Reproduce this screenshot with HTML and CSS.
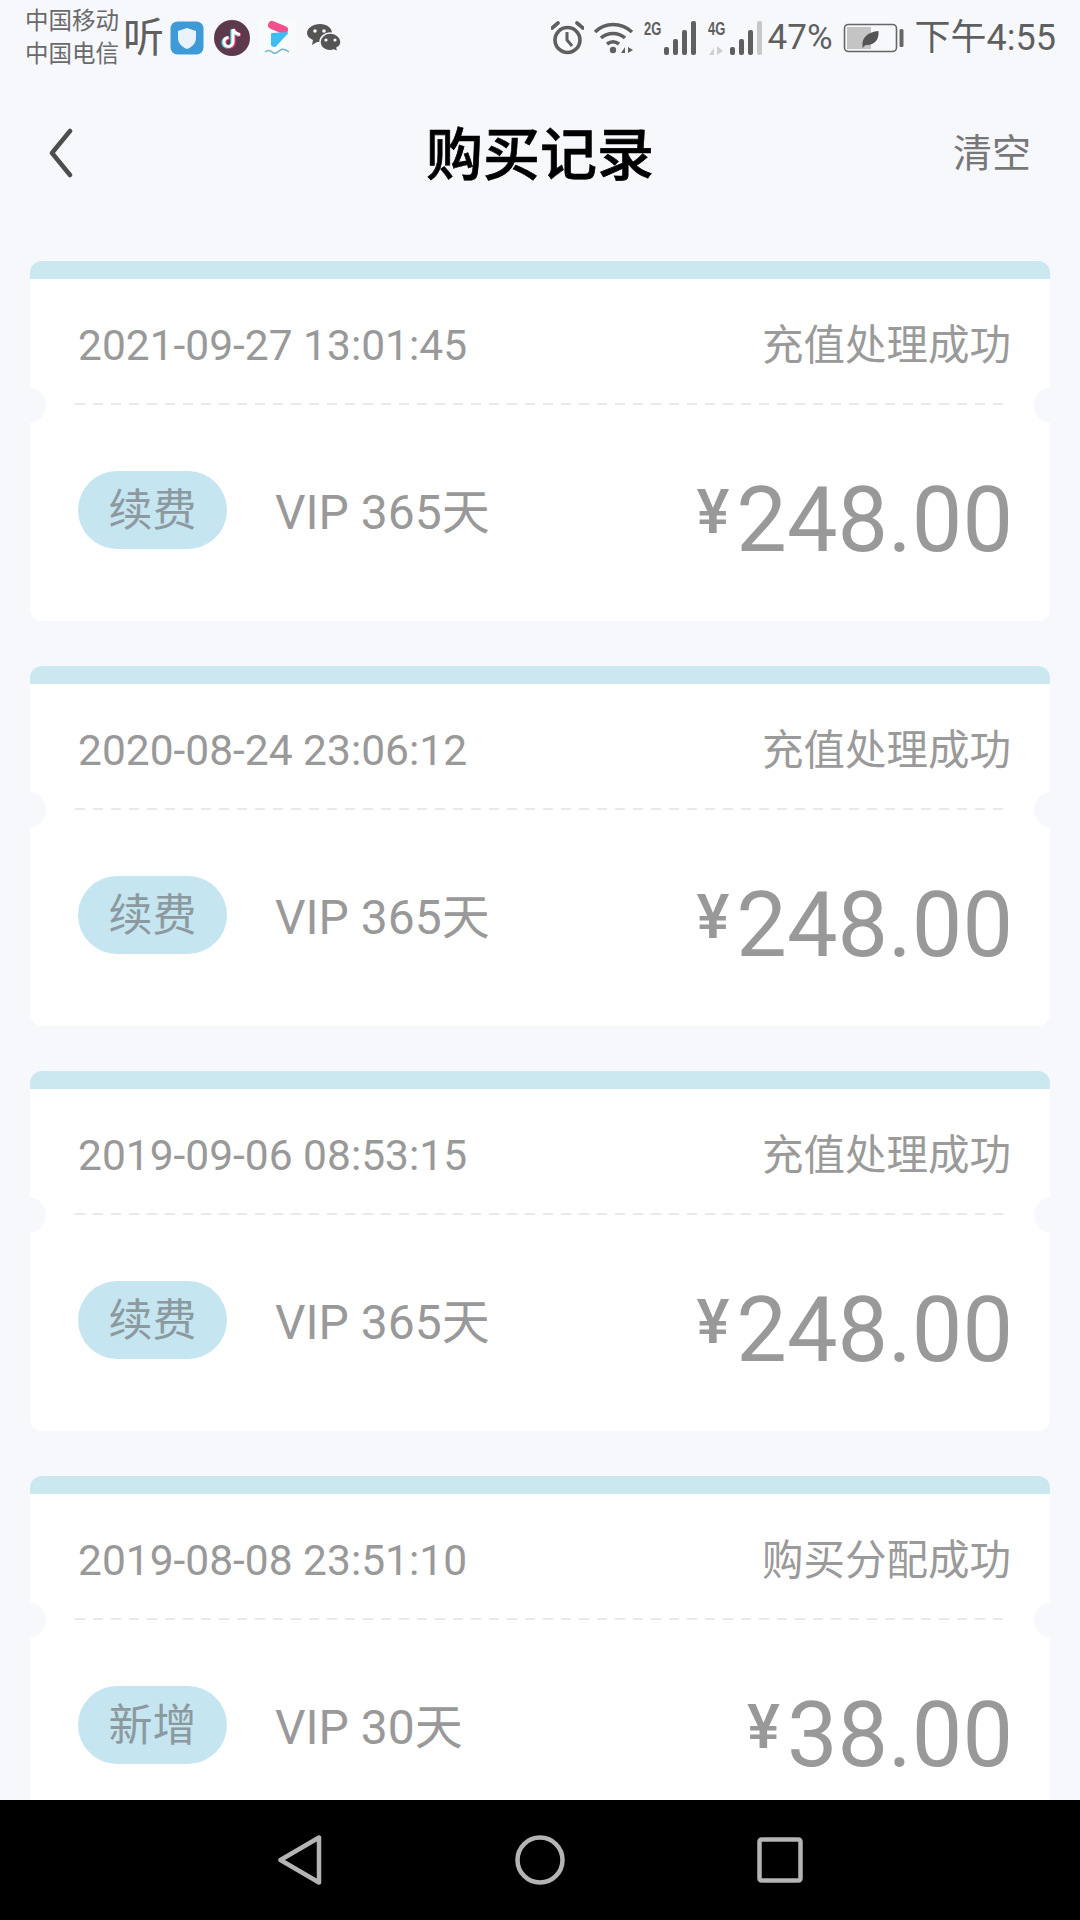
FILE: index.html
```html
<!doctype html>
<html lang="zh-CN">
<head>
    <meta charset="UTF-8">
    <title>购买记录</title>
    <link rel="stylesheet" href="styles.css">
</head>
<body>
<div class="screen">
    <div class="status">
        <div class="carrier"><span>中国移动</span><span>中国电信</span></div>
        <span class="ting">听</span>
        <svg class="ico-shield" width="34" height="34" viewBox="0 0 34 34">
            <rect x="0.5" y="0.5" width="33" height="33" rx="7" fill="#3f9bd8"/>
            <path d="M17 7 L26 10 V17 C26 22 22 26 17 28 C12 26 8 22 8 17 V10 Z" fill="#e9f3f9"/>
        </svg>
        <svg class="ico-tiktok" width="36" height="36" viewBox="0 0 36 36">
            <circle cx="18" cy="18" r="18" fill="#5c3a4b"/>
            <path d="M19 9 V22 A4.5 4.5 0 1 1 14.500 17.500 M19 9 C20 12.500 22 14 26 14.500" fill="none" stroke="#35d3de" stroke-width="3.400" transform="translate(-1 0.500)"/>
            <path d="M19 9 V22 A4.5 4.5 0 1 1 14.500 17.500 M19 9 C20 12.500 22 14 26 14.500" fill="none" stroke="#f0386b" stroke-width="3.400" transform="translate(1 0.500)"/>
            <path d="M19 9 V22 A4.5 4.5 0 1 1 14.500 17.500 M19 9 C20 12.500 22 14 26 14.500" fill="none" stroke="#fff" stroke-width="3"/>
        </svg>
        <svg class="ico-app" width="38" height="38" viewBox="0 0 38 38">
            <rect width="38" height="38" fill="#f8fbfc"/>
            <path d="M14 6 L26 11" fill="none" stroke="#f0508f" stroke-width="8" stroke-linecap="round"/>
            <path d="M14 15 L29 14 L17 27 Q13 27 14 24 Z" fill="#3dbdf2" stroke="#3dbdf2" stroke-width="2" stroke-linejoin="round"/>
            <path d="M7 33 Q11 30 14 33 T21 32 T31 33" fill="none" stroke="#6fb5c8" stroke-width="1.500"/>
        </svg>
        <svg class="ico-wechat" width="34" height="28" viewBox="0 0 34 28">
            <path d="M13 0 C20 0 25 4 25 9 C25 14 20 18 13 18 L10 18 L5 21 L6 16 C2 14 0 12 0 9 C0 4 6 0 13 0 Z" fill="#555"/>
            <path d="M23 9 C29 9 34 13 34 18 C34 21 32 23 30 24 L31 28 L27 26 C21 28 13 25 13 18 C13 13 18 9 23 9 Z" fill="#555" stroke="#f6f8fc" stroke-width="1.500"/>
            <circle cx="8" cy="7" r="1.800" fill="#f6f8fc"/><circle cx="17" cy="7" r="1.800" fill="#f6f8fc"/>
            <circle cx="19" cy="16" r="1.600" fill="#f6f8fc"/><circle cx="28" cy="16" r="1.600" fill="#f6f8fc"/>
        </svg>
        <div class="status-right">
            <svg class="ico-alarm" width="33" height="34" viewBox="0 0 33 34">
                <circle cx="16.500" cy="19" r="12.500" fill="none" stroke="#5f5f5f" stroke-width="3.600"/>
                <path d="M16 11 V19 L21 25" fill="none" stroke="#5f5f5f" stroke-width="3"/>
                <path d="M1 7 L7 2 M32 7 L26 2" stroke="#5f5f5f" stroke-width="3.600" stroke-linecap="round"/>
            </svg>
            <svg class="ico-wifi" width="40" height="33" viewBox="0 0 40 33">
                <path d="M1 11 C11 1 27 1 38 11" fill="none" stroke="#5f5f5f" stroke-width="3.600"/>
                <path d="M7 17 C14 11 24 11 31 17" fill="none" stroke="#5f5f5f" stroke-width="3.600"/>
                <path d="M13 23 C17 20 21 20 25 23" fill="none" stroke="#5f5f5f" stroke-width="3.600"/>
                <circle cx="19" cy="29" r="3.200" fill="#5f5f5f"/>
                <path d="M27 32 L31 26 V32 Z M34 26 L39 29 L34 32 Z" fill="#5f5f5f"/>
            </svg>
            <div class="net">
                <span class="net-label">2G</span>
                <div class="bars">
                    <i class="bar bar-1"></i><i class="bar bar-2"></i><i class="bar bar-3"></i><i class="bar bar-4"></i>
                </div>
            </div>
            <div class="net net-second">
                <div class="net-col">
                    <span class="net-label">4G</span>
                    <svg class="net-arrows" width="16" height="11" viewBox="0 0 16 11">
                        <path d="M1 11 L6 4 V11 Z M9 2 L15 7 L9 11 Z" fill="#cfcfcf"/>
                    </svg>
                </div>
                <div class="bars">
                    <i class="bar bar-1"></i><i class="bar bar-2"></i><i class="bar bar-3"></i><i class="bar bar-4 bar-off"></i>
                </div>
            </div>
            <span class="percent">47%</span>
            <svg class="ico-battery" width="61" height="30" viewBox="0 0 60 30">
                <rect x="1" y="1.500" width="52" height="27" rx="4" fill="none" stroke="#666" stroke-width="1.600"/>
                <rect x="3.500" y="4" width="24" height="22" fill="#c4c4c4"/>
                <path d="M19 23 C18 15 24 9 35 8 C36 17 30 23 22 22 L19 25 Z" fill="#555"/>
                <rect x="56" y="6" width="4" height="18" rx="1.500" fill="#666"/>
            </svg>
            <span class="clock">下午4:55</span>
        </div>
    </div>

    <div class="topbar">
        <svg class="back" width="24" height="50" viewBox="0 0 24 50">
            <path d="M21 3 L3 25 L21 47" fill="none" stroke="#4d4d4d" stroke-width="4.500" stroke-linecap="round" stroke-linejoin="round"/>
        </svg>
        <h1 class="title">购买记录</h1>
        <span class="clear">清空</span>
    </div>

    <div class="list">
        <div class="card">
            <div class="card-head">
                <span class="date">2021-09-27 13:01:45</span>
                <span class="state">充值处理成功</span>
            </div>
            <div class="divider"></div>
            <div class="card-foot">
                <span class="pill">续费</span>
                <span class="plan">VIP 365天</span>
                <div class="price"><span class="yen">¥</span><span class="amount">248.00</span></div>
            </div>
        </div>
        <div class="card">
            <div class="card-head">
                <span class="date">2020-08-24 23:06:12</span>
                <span class="state">充值处理成功</span>
            </div>
            <div class="divider"></div>
            <div class="card-foot">
                <span class="pill">续费</span>
                <span class="plan">VIP 365天</span>
                <div class="price"><span class="yen">¥</span><span class="amount">248.00</span></div>
            </div>
        </div>
        <div class="card">
            <div class="card-head">
                <span class="date">2019-09-06 08:53:15</span>
                <span class="state">充值处理成功</span>
            </div>
            <div class="divider"></div>
            <div class="card-foot">
                <span class="pill">续费</span>
                <span class="plan">VIP 365天</span>
                <div class="price"><span class="yen">¥</span><span class="amount">248.00</span></div>
            </div>
        </div>
        <div class="card">
            <div class="card-head">
                <span class="date">2019-08-08 23:51:10</span>
                <span class="state">购买分配成功</span>
            </div>
            <div class="divider"></div>
            <div class="card-foot">
                <span class="pill">新增</span>
                <span class="plan">VIP 30天</span>
                <div class="price"><span class="yen">¥</span><span class="amount">38.00</span></div>
            </div>
        </div>
    </div>

    <div class="navbar">
        <svg width="44" height="50" viewBox="0 0 44 50">
            <path d="M41 2.500 V47.500 L2.500 25 Z" fill="none" stroke="#b4b4b4" stroke-width="4.500" stroke-linejoin="round"/>
        </svg>
        <svg width="50" height="50" viewBox="0 0 50 50">
            <circle cx="25" cy="25" r="22.500" fill="none" stroke="#b4b4b4" stroke-width="4.500"/>
        </svg>
        <svg width="46" height="46" viewBox="0 0 46 46">
            <rect x="2.500" y="2.500" width="41" height="41" rx="2" fill="none" stroke="#b4b4b4" stroke-width="4.500"/>
        </svg>
    </div>
</div>
</body>
</html>
```

FILE: styles.css
```css
*{
    margin: 0;
    padding: 0;
    box-sizing: border-box;
}
body{
    font-family: Roboto, "Noto Sans CJK SC", sans-serif;
    background: #f6f8fc;
}
.screen{
    width: 1080px;
    height: 1920px;
    display: flex;
    flex-direction: column;
    overflow: hidden;
}

/* status bar */
.status{
    height: 72px;
    flex: none;
    display: flex;
    align-items: center;
    padding: 3px 24px 0 25px;
    color: #5f5f5f;
}
.carrier{
    display: flex;
    flex-direction: column;
    font-size: 23.5px;
    line-height: 33px;
    width: 95px;
    white-space: nowrap;
    color: #6a6a6a;
}
.ting{
    font-size: 41px;
    line-height: 44px;
    width: 38px;
    margin-left: 3px;
    font-weight: 400;
}
.ico-shield{
    margin-left: 9px;
}
.ico-tiktok{
    margin-left: 10px;
}
.ico-app{
    margin-left: 8px;
}
.ico-wechat{
    margin-left: 11px;
}
.status-right{
    margin-left: auto;
    display: flex;
    align-items: center;
}
.ico-wifi{
    margin-left: 10px;
}
.net{
    margin-left: 10px;
    width: 54px;
    height: 34px;
    display: flex;
}
.net-second{
    width: 56.5px;
    margin-left: 9.5px;
}
.net-col{
    width: 22.5px;
    flex: none;
    display: flex;
    flex-direction: column;
    justify-content: space-between;
}
.net-label{
    font-family: "Liberation Sans", sans-serif;
    font-size: 18px;
    line-height: 16px;
    font-weight: 700;
    width: 20px;
    flex: none;
    transform: scaleX(0.72);
    transform-origin: left top;
}
.bars{
    display: flex;
    align-items: flex-end;
    gap: 4px;
    height: 34px;
}
.bar{
    display: block;
    width: 5px;
    background: #5f5f5f;
    border-radius: 2px;
}
.bar-1{
    height: 8px;
}
.bar-2{
    height: 16px;
}
.bar-3{
    height: 25px;
}
.bar-4{
    height: 34px;
}
.bar-off{
    background: #c8c8c8;
}
.percent{
    font-size: 35px;
    margin-left: 3.5px;
    line-height: 40px;
}
.ico-battery{
    margin-left: 10px;
}
.clock{
    font-size: 36px;
    line-height: 40px;
    margin-left: 11px;
    white-space: nowrap;
}

/* title row */
.topbar{
    height: 162px;
    flex: none;
    display: flex;
    align-items: center;
    justify-content: space-between;
    padding: 0 49px 0 49px;
    position: relative;
}
.title{
    position: absolute;
    left: 0;
    right: 0;
    text-align: center;
    font-size: 57px;
    line-height: 70px;
    padding-top: 5px;
    font-weight: 500;
    -webkit-text-stroke: 0.7px #000;
    color: #000;
}
.clear{
    font-size: 39px;
    line-height: 50px;
    padding-top: 2px;
    color: #777;
}

/* record cards */
.list{
    flex: 1;
    min-height: 0;
    overflow: hidden;
    display: flex;
    flex-direction: column;
    gap: 45px;
    padding: 27px 30px 0;
}
.card{
    flex: none;
    height: 360px;
    background: #fff;
    border-top: 18px solid #cbe8f0;
    border-radius: 12px;
    position: relative;
    overflow: hidden;
}
.card::before,
.card::after{
    content: "";
    position: absolute;
    top: 108px;
    width: 36px;
    height: 36px;
    border-radius: 50%;
    background: #f6f8fc;
}
.card::before{
    left: -20px;
}
.card::after{
    right: -20px;
}
.card-head{
    height: 124px;
    display: flex;
    align-items: center;
    justify-content: space-between;
    padding: 10px 39px 0 48px;
    color: #999;
}
.date{
    font-size: 42.5px;
    line-height: 50px;
}
.state{
    font-size: 41.5px;
    line-height: 50px;
    color: #9a9a9a;
}
.divider{
    height: 2px;
    margin: 0 44px 0 45px;
    background: repeating-linear-gradient(to right, #e9e9e9 0, #e9e9e9 10px, transparent 10px, transparent 18px);
}
.card-foot{
    height: 216px;
    display: flex;
    align-items: center;
    padding: 0 37px 6px 48px;
}
.pill{
    width: 149px;
    height: 78px;
    border-radius: 39px;
    background: #c5e5f0;
    color: #8c9a9f;
    font-size: 44px;
    line-height: 81px;
    text-align: center;
}
.plan{
    margin-left: 48px;
    padding-top: 5px;
    font-size: 48px;
    line-height: 60px;
    color: #999;
}
.price{
    margin-left: auto;
    padding-top: 21px;
    display: flex;
    align-items: flex-start;
    color: #999;
}
.yen{
    font-size: 62px;
    line-height: 64px;
    margin-top: 11px;
    margin-right: 7px;
    font-weight: 500;
}
.amount{
    font-size: 90px;
    line-height: 104px;
}

/* android nav */
.navbar{
    height: 120px;
    flex: none;
    background: #000;
    display: flex;
    align-items: center;
    justify-content: space-between;
    padding: 0 277px 0 278px;
}
```
